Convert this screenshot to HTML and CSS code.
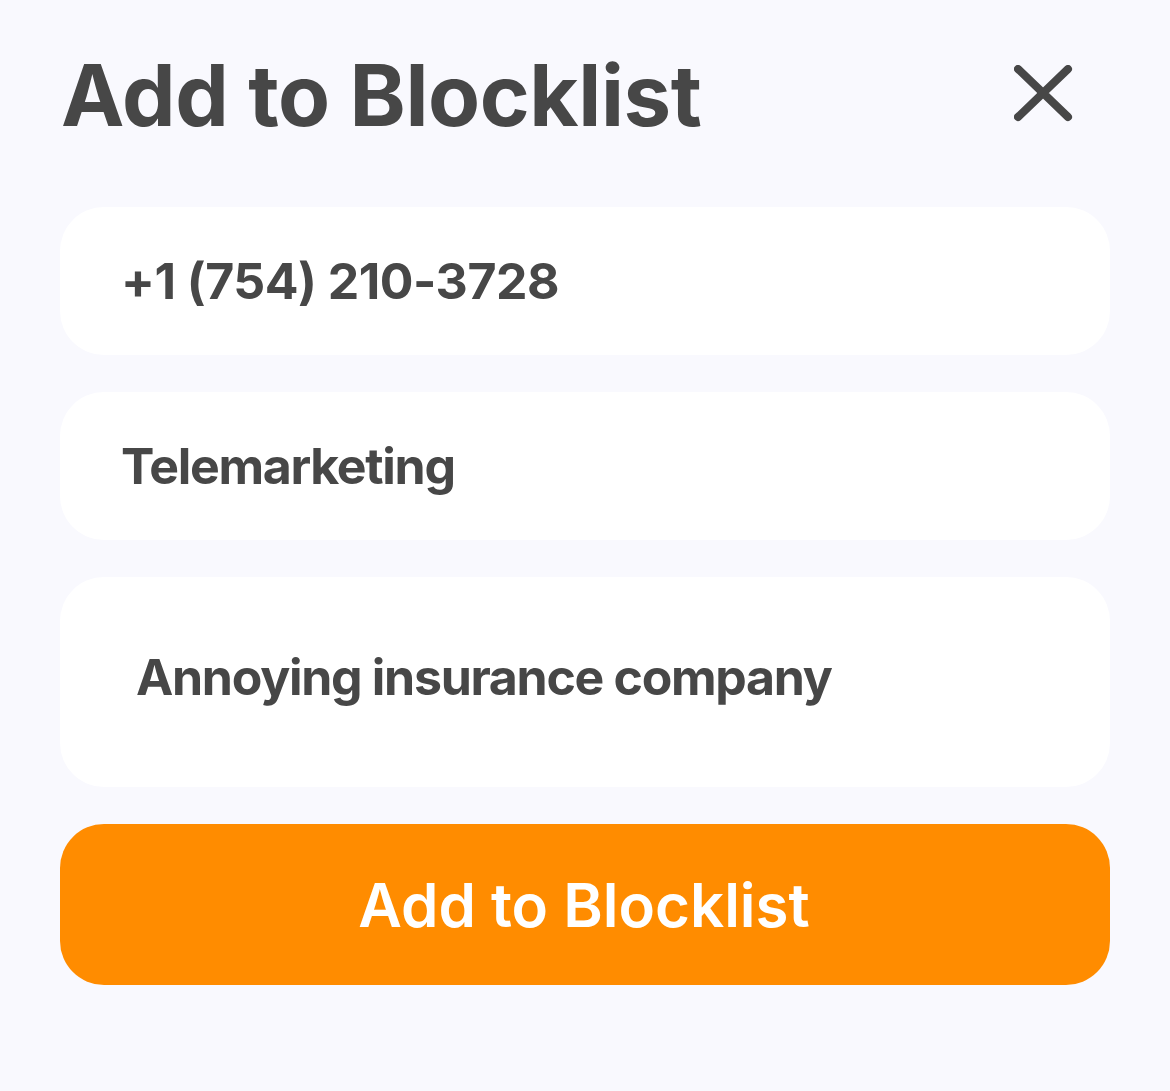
FILE: index.html
```html
<!DOCTYPE html>
<html lang="en">
<head>
<meta charset="utf-8">
<title>Add to Blocklist</title>
<link rel="stylesheet" href="styles.css">
</head>
<body>
<div class="sheet">
  <div class="header">
    <h1 class="title">Add to Blocklist</h1>
    <button class="close" aria-label="Close">
      <svg width="60" height="60" viewBox="0 0 60 60"><path d="M4 4 L54 52 M54 4 L4 52" stroke="#474747" stroke-width="8" stroke-linecap="round" fill="none"/></svg>
    </button>
  </div>
  <div class="form">
    <div class="field field-phone">+1 (754) 210-3728</div>
    <div class="field">Telemarketing</div>
    <div class="field field-note">Annoying insurance company</div>
    <button class="submit">Add to Blocklist</button>
  </div>
</div>
</body>
</html>
```

FILE: styles.css
```css
html, body {
  margin: 0;
  padding: 0;
  background: #f9f9fe;
}
body {
  font-family: Inter, "Noto Sans", sans-serif;
  color: #474747;
}
.sheet {
  padding: 40px 60px 0 60px;
}
.header {
  display: flex;
  justify-content: space-between;
  align-items: center;
  height: 110px;
}
.title {
  margin: 0 0 0 1px;
  font-size: 85px;
  font-weight: 700;
  line-height: 1;
  letter-spacing: -0.4px;
}
.close {
  background: none;
  border: none;
  padding: 0;
  margin-right: 36px;
  width: 60px;
  height: 60px;
  display: flex;
}
.form {
  margin-top: 57px;
  display: flex;
  flex-direction: column;
  gap: 37px;
}
.field {
  background: #ffffff;
  border-radius: 44px;
  height: 148px;
  display: flex;
  align-items: center;
  padding-left: 61px;
  font-size: 50px;
  font-weight: 700;
  letter-spacing: -1.3px;
}
.field-phone {
  letter-spacing: -0.5px;
}
.field-note {
  display: block;
  box-sizing: border-box;
  height: 210px;
  padding-left: 76px;
  padding-top: 70px;
  line-height: 60px;
}
.submit {
  background: #ff8c00;
  color: #ffffff;
  border: none;
  border-radius: 44px;
  height: 161px;
  font-family: Inter, "Noto Sans", sans-serif;
  font-size: 60px;
  font-weight: 600;
  padding: 0 2px 0 0;
}
```
